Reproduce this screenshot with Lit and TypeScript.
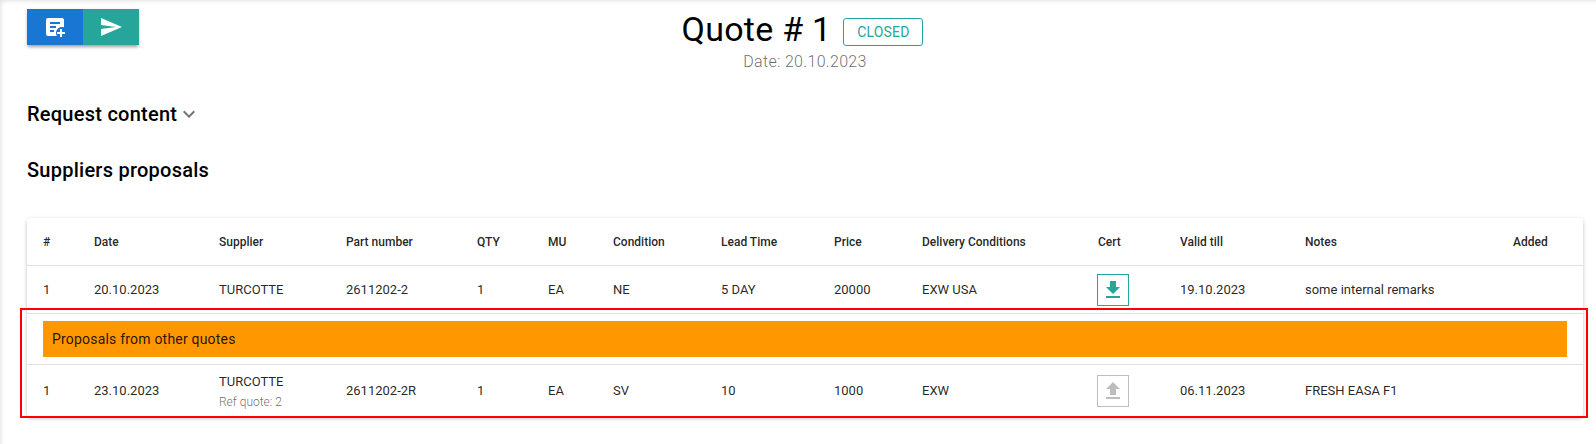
import { LitElement, html, css, svg } from "lit";
import { customElement } from "lit/decorators.js";

const widths = [51, 125, 127, 131, 71, 65, 108, 113, 88, 176, 82, 125, 208, 86];
const heads = ["#", "Date", "Supplier", "Part number", "QTY", "MU", "Condition", "Lead Time", "Price", "Delivery Conditions", "Cert", "Valid till", "Notes", "Added"];

const icon = (d: unknown, size = 24) => html`<svg class="ic" width=${size} height=${size} viewBox="0 0 24 24">${d}</svg>`;
const download = svg`<path fill="currentColor" d="M5,20H19V18H5M19,9H15V3H9V9H5L12,16L19,9Z"/>`;
const upload = svg`<path fill="currentColor" d="M9,16V10H5L12,3L19,10H15V16H9M5,20V18H19V20H5Z"/>`;
const send = svg`<path fill="currentColor" d="M2,21L23,12L2,3V10L17,12L2,14V21Z"/>`;
const notePlus = svg`<path fill="currentColor" fill-rule="evenodd" d="M5,3H19C20.1,3 21,3.9 21,5V12.3C20.4,12.1 19.7,12 19,12C15.7,12 13,14.7 13,18C13,19.1 13.3,20.1 13.8,21H5C3.9,21 3,20.1 3,19V5C3,3.9 3.9,3 5,3ZM7,7V9H17V7ZM7,11V13H13V11ZM7,15V17H11V15Z"/><path fill="currentColor" d="M17,14H19V17H22V19H19V22H17V19H14V17H17V14Z"/>`;

@customElement("app-root")
export class AppRoot extends LitElement {
  static styles = css`
    :host {
      display: block;
      position: relative;
      height: 444px;
      overflow: hidden;
      box-sizing: border-box;
      padding: 0 13px 0 27px;
      background: #fff;
      font-family: Roboto, "Liberation Sans", sans-serif;
      color: rgba(0, 0, 0, 0.87);
      box-shadow: inset 3px 3px 4px -2px rgba(0, 0, 0, 0.12);
    }
    .ic { display: block; }
    .top {
      display: grid;
      grid-template-columns: 1fr auto 1fr;
      align-items: start;
      padding-top: 9px;
    }
    .tools {
      display: flex;
      justify-self: start;
      box-shadow: 0 3px 3px -1px rgba(0, 0, 0, 0.3), 0 1px 4px rgba(0, 0, 0, 0.12);
    }
    .tool {
      width: 56px;
      height: 36px;
      display: flex;
      align-items: center;
      justify-content: center;
      color: #fff;
    }
    .tool.blue { background: #1976d2; }
    .tool.teal { background: #26a69a; }
    .heading { display: flex; flex-direction: column; align-items: center; }
    .title-row { display: flex; align-items: flex-start; gap: 12px; }
    .title { font-size: 34px; line-height: 41px; color: #000; letter-spacing: 0.25px; }
    .badge {
      box-sizing: border-box;
      width: 80px;
      height: 28px;
      margin: 9px 5px 0 0;
      border: 1px solid #26a69a;
      border-radius: 3px;
      color: #26a69a;
      font-size: 14px;
      letter-spacing: 0.2px;
      display: flex;
      align-items: center;
      justify-content: center;
    }
    .date {
      font-size: 16px;
      font-weight: 300;
      line-height: 20px;
      letter-spacing: 0.32px;
      color: rgba(0, 0, 0, 0.6);
      margin-top: 2px;
    }
    h2 {
      margin: 0;
      font-size: 20px;
      font-weight: 500;
      line-height: 24px;
      letter-spacing: 0.25px;
      color: #000;
      display: flex;
      align-items: center;
    }
    .req { margin-top: 30px; }
    .chev { color: #757575; }
    .sup { margin-top: 32px; }
    .card {
      margin-top: 36px;
      border-radius: 4px;
      background: #fff;
      box-shadow: 0 2px 4px -1px rgba(0, 0, 0, 0.2), 0 1px 5px rgba(0, 0, 0, 0.12);
    }
    table { width: 100%; table-layout: fixed; border-collapse: collapse; font-size: 13px; }
    th {
      height: 47px;
      padding: 0 0 0 16px;
      font-size: 12px;
      font-weight: 500;
      text-align: left;
      border-bottom: 1px solid #e0e0e0;
    }
    td { padding: 0 0 0 16px; height: 48px; box-sizing: border-box; }
    tr.sep td { border-bottom: 1px solid #e0e0e0; }
    tr.ban td { padding: 7px 16px; height: 51px; }
    tr.last td { height: 52px; }
    tr.last td.stack { padding-top: 2px; }
    .banner {
      height: 36px;
      background: #ff9800;
      font-size: 14px;
      letter-spacing: 0.2px;
      padding-left: 9px;
      display: flex;
      align-items: center;
    }
    .line { line-height: 20px; }
    .ref { font-size: 12px; font-weight: 300; line-height: 20px; color: rgba(0, 0, 0, 0.6); }
    .cert {
      box-sizing: border-box;
      width: 32px;
      height: 32px;
      border: 1px solid #26a69a;
      color: #26a69a;
      display: flex;
      align-items: center;
      justify-content: center;
      margin-left: -1px;
    }
    .cert.off { border-color: #bdbdbd; color: #bdbdbd; }
    .mark {
      position: absolute;
      left: 20px;
      top: 308px;
      width: 1568px;
      height: 110px;
      box-sizing: border-box;
      border: 2px solid #f00;
      pointer-events: none;
    }
  `;

  render() {
    return html`
      <div class="top">
        <div class="tools">
          <div class="tool blue">${icon(notePlus)}</div>
          <div class="tool teal">${icon(send)}</div>
        </div>
        <div class="heading">
          <div class="title-row">
            <div class="title">Quote # 1</div>
            <div class="badge">CLOSED</div>
          </div>
          <div class="date">Date: 20.10.2023</div>
        </div>
      </div>
      <h2 class="req">Request content
        <svg class="chev" width="24" height="24" viewBox="0 0 24 24"><path fill="currentColor" d="M7.41,8.58L12,13.17L16.59,8.58L18,10L12,16L6,10L7.41,8.58Z"/></svg>
      </h2>
      <h2 class="sup">Suppliers proposals</h2>
      <div class="card">
        <table>
          <colgroup>${widths.map((w) => html`<col style="width:${w}px" />`)}</colgroup>
          <thead><tr>${heads.map((h) => html`<th>${h}</th>`)}</tr></thead>
          <tbody>
            <tr class="sep">
              <td>1</td><td>20.10.2023</td><td>TURCOTTE</td><td>2611202-2</td><td>1</td><td>EA</td><td>NE</td>
              <td>5 DAY</td><td>20000</td><td>EXW USA</td>
              <td><div class="cert">${icon(download)}</div></td>
              <td>19.10.2023</td><td>some internal remarks</td><td></td>
            </tr>
            <tr class="sep ban"><td colspan="14"><div class="banner">Proposals from other quotes</div></td></tr>
            <tr class="last">
              <td>1</td><td>23.10.2023</td>
              <td class="stack"><div class="line">TURCOTTE</div><div class="ref">Ref quote: 2</div></td>
              <td>2611202-2R</td><td>1</td><td>EA</td><td>SV</td>
              <td>10</td><td>1000</td><td>EXW</td>
              <td><div class="cert off">${icon(upload)}</div></td>
              <td>06.11.2023</td><td>FRESH EASA F1</td><td></td>
            </tr>
          </tbody>
        </table>
      </div>
      <div class="mark"></div>
    `;
  }
}
